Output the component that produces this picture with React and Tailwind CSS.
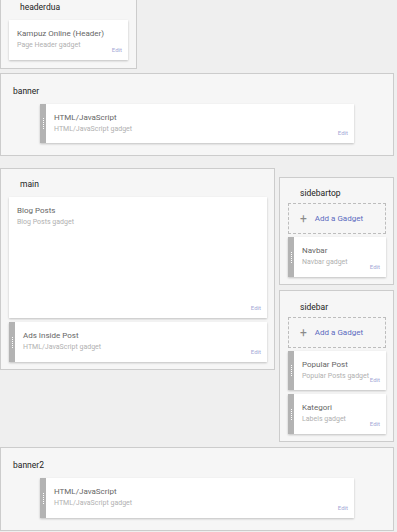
const font = { fontFamily: 'Roboto, "Liberation Sans", sans-serif' };

function Handle() {
  return (
    <div className="flex w-[6px] shrink-0 items-center justify-center bg-[#b3b3b3]">
      <div className="h-[11px] border-l border-dotted border-white" />
    </div>
  );
}

function Gadget({ title, type, handle = true, className = '', edit = 'bottom-[7px]' }) {
  return (
    <div className={`relative flex bg-white shadow-[0_1px_2px_rgba(0,0,0,0.22)] ${className}`}>
      {handle && <Handle />}
      <div className="flex-1 whitespace-nowrap pl-[8px] pt-[8px]">
        <div className="text-[8px] leading-[12px] text-[#666]">{title}</div>
        <div className="text-[7px] leading-[10px] text-[#b0b0b0]">{type}</div>
      </div>
      <div className={`absolute right-[6px] text-[6px] leading-[6px] text-[#a5a8d6] ${edit}`}>Edit</div>
    </div>
  );
}

function AddGadget({ className = '' }) {
  return (
    <div className={`flex h-[31px] items-center border border-dashed border-[#bdbdbd] pl-[11px] ${className}`}>
      <span className="text-[12px] leading-none text-[#8a8a8a]">+</span>
      <span className="ml-[8px] text-[8px] text-[#5c6bc0]">Add a Gadget</span>
    </div>
  );
}

function Label({ children, className = '' }) {
  return <div className={`text-[8.5px] leading-[12px] text-[#222] ${className}`}>{children}</div>;
}

export default function App() {
  return (
    <div className="h-[532px] w-[397px] overflow-hidden bg-[#efefef]" style={font}>
      {/* headerdua */}
      <div className="h-[69px] w-[137px] border border-t-0 border-[#cccccc] bg-[#f6f6f6]">
        <Label className="pl-[19px] pt-px">headerdua</Label>
        <Gadget
          title="Kampuz Online (Header)"
          type="Page Header gadget"
          handle={false}
          className="ml-[8px] mt-[7px] h-[40px] w-[119px]"
        />
      </div>

      {/* banner */}
      <div className="mt-[4px] h-[83px] w-[394px] border border-[#cccccc] bg-[#f6f6f6]">
        <Label className="pl-[12px] pt-[11px]">banner</Label>
        <Gadget
          title="HTML/JavaScript"
          type="HTML/JavaScript gadget"
          className="ml-[39px] mt-[7px] h-[39px] w-[314px]"
        />
      </div>

      <div className="mt-[12px] flex items-start">
        {/* main */}
        <div className="h-[202px] w-[275px] border border-[#cccccc] bg-[#f6f6f6]">
          <Label className="pl-[19px] pt-[9px]">main</Label>
          <div className="flex flex-col gap-[4px] pl-[8px] pt-[7px]">
            <Gadget
              title="Blog Posts"
              type="Blog Posts gadget"
              handle={false}
              className="h-[121px] w-[258px]"
            />
            <Gadget
              title="Ads Inside Post"
              type="HTML/JavaScript gadget"
              className="h-[40px] w-[258px]"
            />
          </div>
        </div>

        {/* sidebars */}
        <div className="ml-[4px] mt-[9px] flex flex-col gap-[5px]">
          <div className="h-[108px] w-[115px] border border-[#cccccc] bg-[#f6f6f6]">
            <Label className="pl-[20px] pt-[9px]">sidebartop</Label>
            <div className="flex flex-col gap-[3px] pl-[8px] pt-[4px]">
              <AddGadget className="w-[98px]" />
              <Gadget title="Navbar" type="Navbar gadget" className="h-[40px] w-[98px]" />
            </div>
          </div>
          <div className="h-[152px] w-[115px] border border-[#cccccc] bg-[#f6f6f6]">
            <Label className="pl-[20px] pt-[10px]">sidebar</Label>
            <div className="flex flex-col gap-[4px] pl-[8px] pt-[4px]">
              <AddGadget className="mb-[-1px] w-[98px]" />
              <Gadget title="Popular Post" type="Popular Posts gadget" className="h-[39px] w-[98px]" />
              <Gadget title="Kategori" type="Labels gadget" className="h-[40px] w-[98px]" />
            </div>
          </div>
        </div>
      </div>

      {/* banner2 */}
      <div className="mt-[5px] h-[84px] w-[394px] border border-[#cccccc] bg-[#f6f6f6]">
        <Label className="pl-[12px] pt-[11px]">banner2</Label>
        <Gadget
          title="HTML/JavaScript"
          type="HTML/JavaScript gadget"
          className="ml-[39px] mt-[7px] h-[40px] w-[314px]"
        />
      </div>
    </div>
  );
}
